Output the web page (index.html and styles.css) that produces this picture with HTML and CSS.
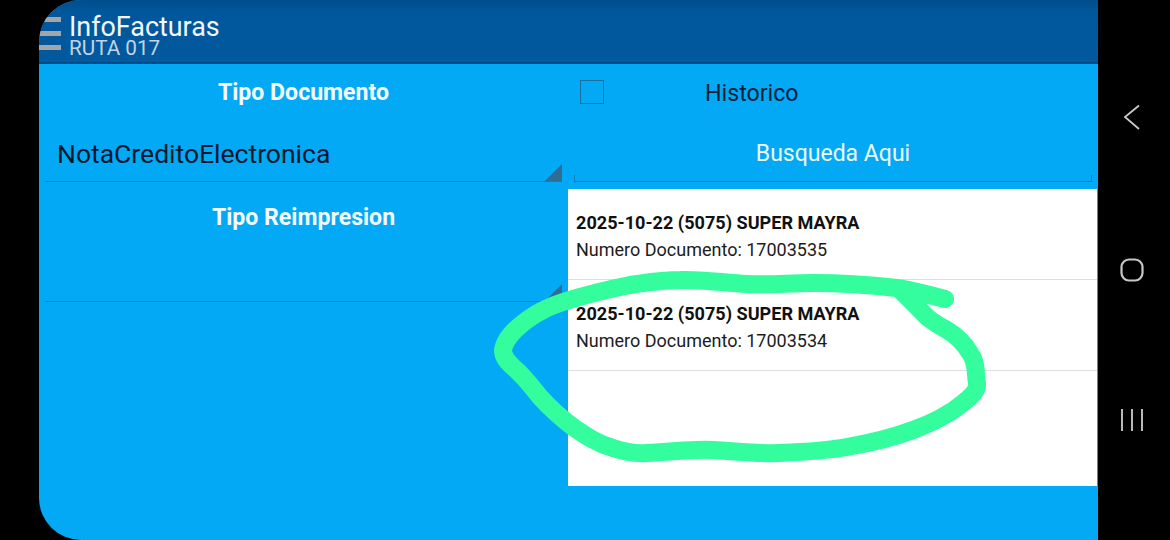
FILE: index.html
```html
<!DOCTYPE html>
<html lang="es">
<head>
<meta charset="utf-8">
<title>InfoFacturas</title>
<link rel="stylesheet" href="styles.css">
</head>
<body>
<div class="device">
  <main class="app">
    <header class="appbar">
      <div class="menu"><span class="bar bar1"></span><span class="bar bar2"></span><span class="bar bar3"></span></div>
      <div class="titles">
        <div class="title">InfoFacturas</div>
        <div class="subtitle">RUTA 017</div>
      </div>
    </header>
    <div class="content">
      <section class="left">
        <div class="label label-doc">Tipo Documento</div>
        <div class="spinner spinner-doc"><span>NotaCreditoElectronica</span><i class="tri"></i></div>
        <div class="label label-re">Tipo Reimpresion</div>
        <div class="spinner spinner-re"><i class="tri"></i></div>
      </section>
      <section class="right">
        <div class="hist"><span class="check"></span><span class="hist-text">Historico</span></div>
        <div class="search">Busqueda Aqui</div>
        <div class="list">
          <div class="row">
            <div class="row-title">2025-10-22 (5075) SUPER MAYRA</div>
            <div class="row-sub">Numero Documento: 17003535</div>
          </div>
          <div class="row">
            <div class="row-title">2025-10-22 (5075) SUPER MAYRA</div>
            <div class="row-sub">Numero Documento: 17003534</div>
          </div>
        </div>
      </section>
    </div>
  </main>
  <nav class="nav">
    <svg width="24" height="30" viewBox="0 0 24 30"><path d="M19 3.500 L5 15 L19 27" fill="none" stroke="#c8c8c8" stroke-width="1.800"/></svg>
    <svg width="26" height="26" viewBox="0 0 26 26"><rect x="2.500" y="2.500" width="21" height="21" rx="7.500" fill="none" stroke="#c8c8c8" stroke-width="2.200"/></svg>
    <svg width="26" height="24" viewBox="0 0 26 24"><path d="M3 1V23M13 1V23M23 1V23" fill="none" stroke="#b8b8b8" stroke-width="2"/></svg>
  </nav>
  <svg class="scribble" width="1170" height="540" viewBox="0 0 1170 540">
    <path d="M945 299 C930 295 915 291 897 288 C870 285 840 283 813 283 C790 283 770 285 747 284 C725 283 700 279 680 280 C660 280 645 283 630 285 C605 290 585 295 563 302 C550 306 538 312 527 320 C515 329 505 338 503 350 C503 358 508 362 513 367 C523 375 532 387 540 397 C550 408 561 418 573 427 C586 436 598 444 613 448 C625 452 636 454 647 453 C670 452 690 449 713 450 C735 451 757 454 780 453 C803 452 825 451 847 447 C870 443 892 438 913 430 C932 423 950 414 963 403 C972 396 978 390 977 383 C975 372 977 362 970 353 C964 343 957 336 947 330 C938 325 934 323 927 317 C918 308 909 298 900 290" fill="none" stroke="#33fd9c" stroke-width="18" stroke-linecap="round" stroke-linejoin="round"/>
  </svg>
</div>
</body>
</html>
```
FILE: styles.css
```css
* { box-sizing: border-box; }
html, body { margin: 0; padding: 0; background: #000; }
body { width: 1170px; height: 540px; overflow: hidden; font-family: Roboto, "Liberation Sans", sans-serif; }
.device { position: relative; width: 1170px; height: 540px; padding-left: 39px; display: flex; background: #000; }
.app { width: 1059px; height: 540px; background: #03a9f4; border-radius: 42px 0 0 42px; overflow: hidden; display: flex; flex-direction: column; }
.appbar { height: 64px; flex: none; display: flex; background: linear-gradient(#014d8c, #01579b 12px, #01599e); border-bottom: 2px solid #014a85; }
.menu { width: 30px; flex: none; display: flex; flex-direction: column; align-items: flex-end; gap: 9px; padding: 17px 8px 0 0; }
.bar { display: block; height: 5px; background: #a3a6a9; }
.bar1 { width: 17px; }
.bar2 { width: 21px; }
.bar3 { width: 22px; }
.titles { display: flex; flex-direction: column; padding-top: 15px; }
.title { font-size: 26.900px; line-height: 24px; color: #f2f7fb; }
.subtitle { font-size: 20.700px; line-height: 18px; color: #c3d4e4; }
.content { flex: 1; display: flex; min-height: 0; }
.left { width: 529px; flex: none; padding: 0 6px; display: flex; flex-direction: column; }
.label { font-weight: 700; font-size: 23.100px; color: #f4fbff; text-align: center; }
.label-doc { line-height: 26px; padding-top: 16px; height: 41px; }
.spinner { position: relative; border-bottom: 1px solid #0b80c2; }
.spinner-doc { height: 77px; padding-left: 12px; font-size: 26.500px; line-height: 28px; color: #03182e; padding-top: 35px; }
.label-re { height: 35px; padding-top: 23px; line-height: 26px; box-sizing: content-box; }
.spinner-re { height: 62px; }
.tri { position: absolute; right: 0; bottom: 0; width: 0; height: 0; border-left: 17px solid transparent; border-bottom: 17px solid #2f6e94; }
.right { width: 530px; flex: none; display: flex; flex-direction: column; }
.hist { height: 56px; flex: none; display: flex; align-items: center; padding: 0 0 0 12px; }
.check { width: 24px; height: 24px; flex: none; border: 1.500px solid #1c6f9f; }
.hist-text { font-size: 23.200px; color: #03203c; margin-left: 101px; line-height: 26px; position: relative; top: 1px; }
.search { height: 62px; flex: none; margin: 0 6px; padding-top: 21px; text-align: center; color: #eef9ff; font-size: 23px; line-height: 26px; border-bottom: 1px solid #0c7ebc; position: relative; }
.search::before, .search::after { content: ""; position: absolute; bottom: 0; width: 1px; height: 6px; background: #0c7ebc; }
.search::before { left: 0; }
.search::after { right: 0; }
.list { margin-top: 7px; height: 297px; width: 529px; flex: none; background: #fff; }
.row { height: 91px; padding: 22px 8px 0; border-bottom: 1px solid #dedede; color: #111; }
.row-title { font-weight: 700; font-size: 18.100px; line-height: 24px; }
.row-sub { font-size: 18px; line-height: 24px; margin-top: 3px; color: #1c1c1c; }
.nav { width: 72px; flex: none; display: flex; flex-direction: column; align-items: center; gap: 125px; padding: 102px 4px 0 0; }
.scribble { position: absolute; left: 0; top: 0; pointer-events: none; }
```
